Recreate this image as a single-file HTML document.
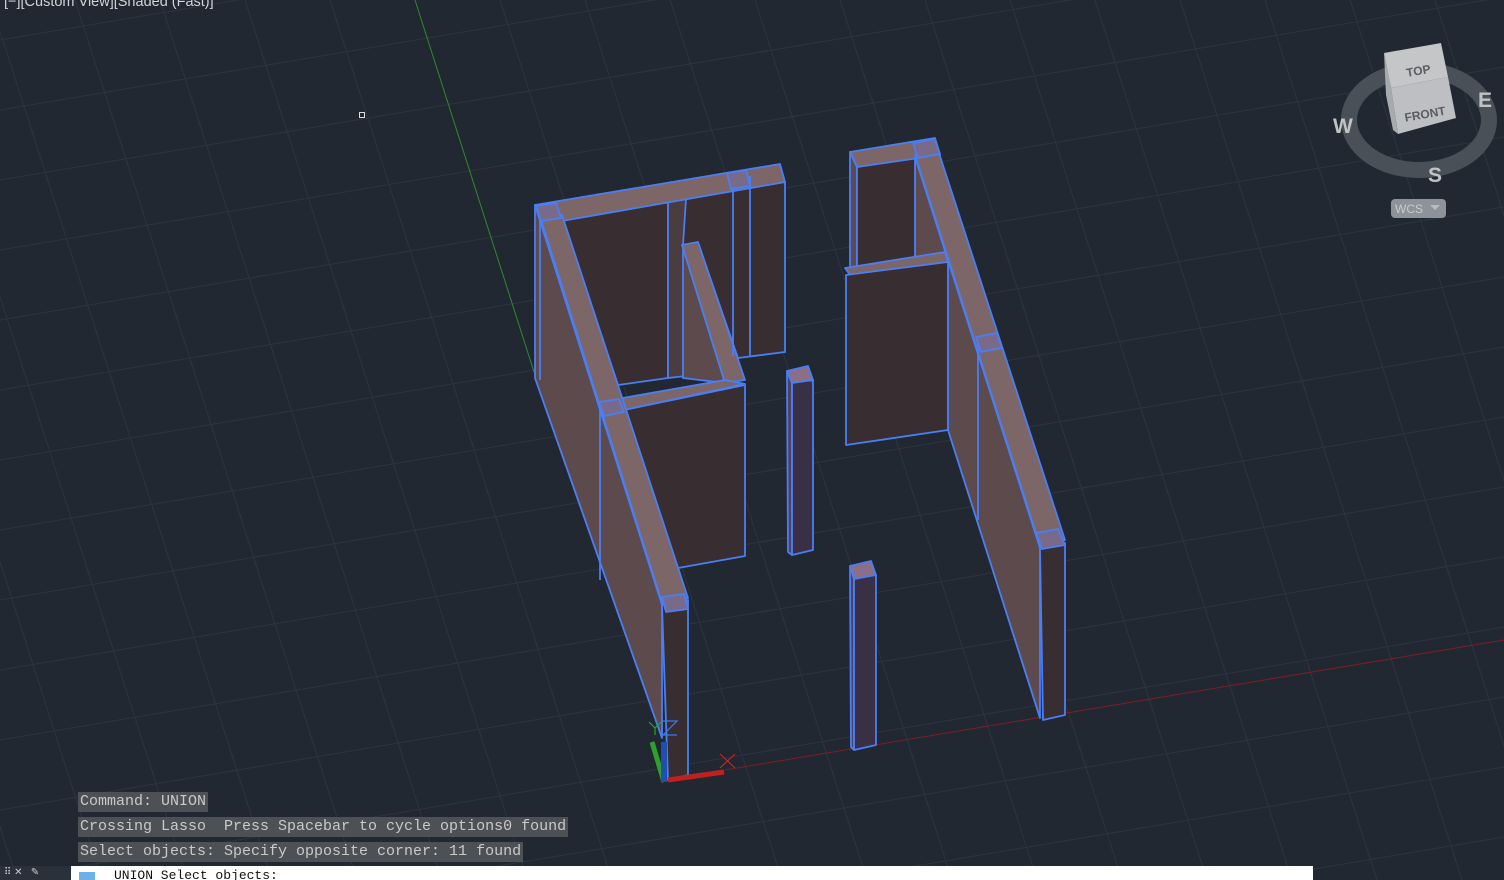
<!DOCTYPE html>
<html><head><meta charset="utf-8"><style>
html,body{margin:0;padding:0;width:1504px;height:880px;overflow:hidden;background:#222831;position:relative;}
.t{position:absolute;font-family:"Liberation Sans",sans-serif;white-space:nowrap;}
.cmd{position:absolute;left:78px;height:20px;background:#4d5155;color:#c9c9c9;font-family:"Liberation Mono",monospace;font-size:15px;line-height:20px;padding:0 2px;white-space:pre;}
</style></head><body>
<svg width="1504" height="880" style="position:absolute;left:0;top:0">
<g stroke="#2d3541" stroke-width="1">
<line x1="0" y1="40" x2="1504" y2="-213"/><line x1="0" y1="110" x2="1504" y2="-143"/><line x1="0" y1="180" x2="1504" y2="-73"/><line x1="0" y1="250" x2="1504" y2="-3"/><line x1="0" y1="320" x2="1504" y2="67"/><line x1="0" y1="390" x2="1504" y2="137"/><line x1="0" y1="460" x2="1504" y2="207"/><line x1="0" y1="530" x2="1504" y2="277"/><line x1="0" y1="600" x2="1504" y2="347"/><line x1="0" y1="670" x2="1504" y2="417"/><line x1="0" y1="740" x2="1504" y2="487"/><line x1="0" y1="810" x2="1504" y2="557"/><line x1="0" y1="880" x2="1504" y2="627"/><line x1="0" y1="950" x2="1504" y2="697"/><line x1="0" y1="1020" x2="1504" y2="767"/><line x1="0" y1="1090" x2="1504" y2="837"/><line x1="0" y1="1160" x2="1504" y2="907"/>
<line x1="-265" y1="0" x2="17" y2="880"/><line x1="-180" y1="0" x2="102" y2="880"/><line x1="-95" y1="0" x2="187" y2="880"/><line x1="-10" y1="0" x2="272" y2="880"/><line x1="75" y1="0" x2="357" y2="880"/><line x1="160" y1="0" x2="442" y2="880"/><line x1="245" y1="0" x2="527" y2="880"/><line x1="330" y1="0" x2="612" y2="880"/><line x1="500" y1="0" x2="782" y2="880"/><line x1="585" y1="0" x2="867" y2="880"/><line x1="670" y1="0" x2="952" y2="880"/><line x1="755" y1="0" x2="1037" y2="880"/><line x1="840" y1="0" x2="1122" y2="880"/><line x1="925" y1="0" x2="1207" y2="880"/><line x1="1010" y1="0" x2="1292" y2="880"/><line x1="1095" y1="0" x2="1377" y2="880"/><line x1="1180" y1="0" x2="1462" y2="880"/><line x1="1265" y1="0" x2="1547" y2="880"/><line x1="1350" y1="0" x2="1632" y2="880"/><line x1="1435" y1="0" x2="1717" y2="880"/>
</g>
<line x1="415" y1="0" x2="535" y2="375" stroke="#2f8a2f" stroke-width="1"/>
<line x1="725" y1="770" x2="1504" y2="640" stroke="#7a2024" stroke-width="1"/>
<g stroke="#4a7ef5" stroke-width="1.8" stroke-linejoin="round">
<polygon points="535,205 662,605 662,738 535,378" fill="#5c4a4d"/>
<polygon points="562,220 668,202 668,378 618,385" fill="#382d30"/>
<polygon points="668,202 686,199 686,376 668,378" fill="#4a3c3f"/>
<polygon points="686,199 785,182 785,352 738,358 698,243 683,245" fill="#382d30"/>
<polygon points="683,246 725,383 683,378" fill="#5c4a4d"/>
<polygon points="682,245 698,242 745,380 725,383" fill="#7d6668"/>
<polygon points="535,205 780,164 785,182 562,221" fill="#7d6668"/>
<polygon points="600,402 725,380 745,384 624,410" fill="#7d6668"/>
<polygon points="624,410 745,385 745,556 678,568" fill="#382d30"/>
<polygon points="537,207 562,215 688,598 662,603" fill="#7d6668"/>
<polygon points="662,605 688,600 688,775 668,780" fill="#382d30"/>
<line x1="600" y1="405" x2="600" y2="580"/>
<line x1="540" y1="215" x2="540" y2="380"/>
<line x1="733" y1="178" x2="733" y2="356"/><line x1="750" y1="176" x2="750" y2="356"/>
<polygon points="536,206 556,203 561,218 541,221" fill="#7a6a8a"/>
<polygon points="727,173 746,170 750,186 731,189" fill="#7a6a8a"/>
<polygon points="599,402 619,399 624,412 604,416" fill="#7a6a8a"/>
<polygon points="662,597 684,594 688,609 666,612" fill="#7a6a8a"/>
<polygon points="787,371 792,383 792,555 788,552" fill="#4d4060"/>
<polygon points="787,371 808,366 813,380 792,383" fill="#8a6f86"/>
<polygon points="792,383 813,380 813,550 792,555" fill="#3a3046"/>
<polygon points="850,566 854,579 854,750 851,747" fill="#4d4060"/>
<polygon points="850,566 871,561 876,575 854,579" fill="#8a6f86"/>
<polygon points="854,579 876,575 876,745 854,750" fill="#3a3046"/>
<polygon points="915,157 1040,548 1040,718 948,430 948,258 915,262" fill="#5c4a4d"/>
<polygon points="850,152 857,167 857,268 850,268" fill="#5c4a4d"/>
<polygon points="857,167 915,157 915,258 857,268" fill="#382d30"/>
<polygon points="850,152 935,138 940,155 857,167" fill="#7d6668"/>
<polygon points="845,268 945,252 948,262 850,275" fill="#7d6668"/>
<polygon points="846,275 948,262 948,430 846,445" fill="#382d30"/>
<polygon points="915,155 938,150 1065,540 1040,546" fill="#7d6668"/>
<polygon points="1040,548 1065,543 1065,715 1043,720" fill="#382d30"/>
<line x1="978" y1="340" x2="978" y2="520"/>
<polygon points="913,143 935,139 940,154 918,158" fill="#7a6a8a"/>
<polygon points="976,337 997,333 1002,348 981,352" fill="#7a6a8a"/>
<polygon points="1036,533 1058,529 1065,545 1042,549" fill="#7a6a8a"/>
</g>
<line x1="652" y1="742" x2="664" y2="782" stroke="#2ea02e" stroke-width="5"/>
<line x1="664" y1="742" x2="664" y2="782" stroke="#1f4fb0" stroke-width="6"/>
<line x1="668" y1="780" x2="724" y2="772" stroke="#c02020" stroke-width="5"/>
<g stroke="#2ea02e" stroke-width="1.2" fill="none"><path d="M649 722 L655 728 L661 722 M655 728 L655 735"/></g>
<g stroke="#3a7cf0" stroke-width="1.2" fill="none"><path d="M661 721 L677 721 L663 735 L677 735"/></g>
<g stroke="#d02828" stroke-width="1"><line x1="720" y1="754" x2="735" y2="768"/><line x1="735" y1="754" x2="720" y2="768"/></g>
<rect x="359.5" y="112.5" width="5" height="5" fill="none" stroke="#ddd" stroke-width="1"/>
<ellipse cx="1419" cy="120" rx="70" ry="50" fill="none" stroke="#4a5058" stroke-width="16"/>
<polygon points="1384,53 1441,43 1448,77 1391,88" fill="#c4c6c8"/>
<polygon points="1391,88 1448,77 1456,118 1398,134" fill="#bdbfc2"/>
<polygon points="1384,53 1391,88 1398,134 1393,130 1386,95" fill="#a8abae"/>
<text x="1406" y="75" font-family="Liberation Sans" font-weight="bold" font-size="12" fill="#5a5d62" transform="rotate(-10 1418 70)">TOP</text>
<text x="1404" y="118" font-family="Liberation Sans" font-weight="bold" font-size="12" fill="#5a5d62" transform="rotate(-10 1426 112)">FRONT</text>
<text x="1333" y="133" font-family="Liberation Sans" font-weight="bold" font-size="21" fill="#c0c2c4">W</text>
<text x="1478" y="107" font-family="Liberation Sans" font-weight="bold" font-size="21" fill="#c0c2c4">E</text>
<text x="1428" y="182" font-family="Liberation Sans" font-weight="bold" font-size="21" fill="#c0c2c4">S</text>
<rect x="1391" y="199" width="55" height="19" rx="4" fill="#8e939a"/>
<text x="1395" y="213" font-family="Liberation Sans" font-size="12" fill="#c7cacf">WCS</text>
<path d="M1430 205 L1440 205 L1435 210 Z" fill="#b8bcc2"/>
</svg>
<div class="t" style="left:4px;top:-6px;font-size:14.5px;color:#d0d3d8">[−][Custom View][Shaded (Fast)]</div>
<div class="cmd" style="top:792px">Command: UNION</div>
<div class="cmd" style="top:817px">Crossing Lasso  Press Spacebar to cycle options0 found</div>
<div class="cmd" style="top:842px">Select objects: Specify opposite corner: 11 found</div>
<div style="position:absolute;left:0;top:866px;width:72px;height:14px;background:#2b313a;overflow:hidden"></div>
<div class="t" style="left:4px;top:866px;height:14px;overflow:hidden;font-size:10px;line-height:14px;color:#ccc">⠿ ✕ &nbsp;&nbsp;✎</div>
<div style="position:absolute;left:71px;top:866px;width:1242px;height:14px;background:#fff;overflow:hidden">
<div style="position:absolute;left:8px;top:6px;width:16px;height:8px;background:#6fb0e8"></div>
<div style="position:absolute;left:43px;top:3px;font-family:'Liberation Mono',monospace;font-size:13px;line-height:14px;color:#111;white-space:nowrap">UNION Select objects:</div>
</div>
</body></html>
